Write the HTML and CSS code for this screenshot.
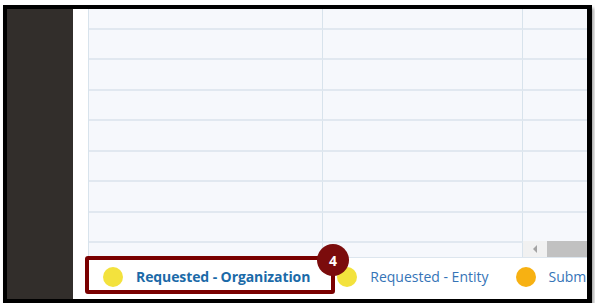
FILE: index.html
```html
<!DOCTYPE html>
<html lang="en">
<head>
    <meta charset="UTF-8">
    <title>Requests grid</title>
    <link rel="stylesheet" href="styles.css">
</head>
<body>
    <div class="frame">
        <div class="sidebar"></div>
        <div class="main">
            <div class="grid">
                <div class="row first"><div class="cell c1"></div><div class="cell c2"></div><div class="cell c3"></div></div>
                <div class="row"><div class="cell c1"></div><div class="cell c2"></div><div class="cell c3"></div></div>
                <div class="row"><div class="cell c1"></div><div class="cell c2"></div><div class="cell c3"></div></div>
                <div class="row"><div class="cell c1"></div><div class="cell c2"></div><div class="cell c3"></div></div>
                <div class="row"><div class="cell c1"></div><div class="cell c2"></div><div class="cell c3"></div></div>
                <div class="row"><div class="cell c1"></div><div class="cell c2"></div><div class="cell c3"></div></div>
                <div class="row"><div class="cell c1"></div><div class="cell c2"></div><div class="cell c3"></div></div>
                <div class="row"><div class="cell c1"></div><div class="cell c2"></div><div class="cell c3"></div></div>
                <div class="row last">
                    <div class="cell c1"></div>
                    <div class="cell c2"></div>
                    <div class="cell c3">
                        <div class="scrollbar">
                            <div class="scroll-arrow"></div>
                            <div class="scroll-thumb"></div>
                        </div>
                    </div>
                </div>
            </div>
            <div class="legend">
                <div class="legend-item">
                    <span class="dot yellow"></span>
                    <span class="label strong">Requested - Organization</span>
                </div>
                <div class="legend-item">
                    <span class="dot yellow"></span>
                    <span class="label">Requested - Entity</span>
                </div>
                <div class="legend-item">
                    <span class="dot orange"></span>
                    <span class="label">Submitted</span>
                </div>
                <div class="callout"></div>
                <div class="badge">4</div>
            </div>
        </div>
    </div>
</body>
</html>
```

FILE: styles.css
```css
body {
    margin: 0;
    background-color: #ffffff;
    font-family: 'Open Sans', 'Noto Sans', sans-serif;
}
.frame {
    display: flex;
    margin: 5px 0 0 3px;
    width: 580px;
    height: 290px;
    border: 4px solid #000000;
    border-right-width: 5px;
    box-shadow: 2px 3px 3px rgba(0, 0, 0, 0.35);
    overflow: hidden;
}
.sidebar {
    width: 66px;
    flex-shrink: 0;
    background-color: #322e2b;
}
.main {
    flex: 1;
    display: flex;
    flex-direction: column;
    background-color: #ffffff;
    overflow: hidden;
}
.grid {
    margin-left: 15px;
    height: 249px;
    border-left: 1px solid #d8e3ec;
    border-bottom: 1px solid #dde6ee;
    box-sizing: border-box;
    background-color: #f6f8fc;
    display: flex;
    flex-direction: column;
}
.row {
    display: flex;
    height: 30.43px;
    flex-shrink: 0;
}
.row.first {
    height: 21px;
}
.row.last {
    flex: 1;
    height: auto;
}
.cell {
    box-sizing: border-box;
    border-bottom: 2px solid #e1e8f0;
    border-right: 1px solid #d8e3ec;
    flex-shrink: 0;
}
.row.last .cell {
    border-bottom: none;
}
.c1 {
    width: 234px;
}
.c2 {
    width: 200px;
}
.c3 {
    width: 80px;
    position: relative;
}
.scrollbar {
    position: absolute;
    left: 0;
    bottom: 0;
    right: 0;
    height: 16px;
    display: flex;
    background-color: #f1f1f1;
}
.scroll-arrow {
    width: 24px;
    display: flex;
    align-items: center;
    justify-content: center;
}
.scroll-arrow::before {
    content: '';
    border-top: 4px solid transparent;
    border-bottom: 4px solid transparent;
    border-right: 4px solid #a3a3a3;
}
.scroll-thumb {
    flex: 1;
    background-color: #c1c1c1;
}
.legend {
    position: relative;
    flex: 1;
    display: flex;
    align-items: center;
    padding-left: 30px;
    padding-bottom: 4px;
}
.legend-item {
    display: flex;
    align-items: center;
    gap: 13px;
    margin-right: 27px;
    flex-shrink: 0;
}
.dot {
    width: 20px;
    height: 20px;
    border-radius: 50%;
    flex-shrink: 0;
}
.dot.yellow {
    background-color: #f3e23d;
}
.dot.orange {
    background-color: #f7b112;
}
.label {
    font-size: 14px;
    color: #3574b7;
    white-space: nowrap;
}
.label.strong {
    font-weight: bold;
    color: #1b6aa8;
    letter-spacing: -0.1px;
}
.callout {
    position: absolute;
    left: 12px;
    top: -2px;
    width: 242px;
    height: 30px;
    border: 4px solid #7a0000;
    border-radius: 3px;
}
.badge {
    position: absolute;
    left: 244px;
    top: -14px;
    width: 32px;
    height: 32px;
    border-radius: 50%;
    background-color: #7b0c0c;
    color: #ffffff;
    font-size: 14px;
    font-weight: bold;
    display: flex;
    align-items: center;
    justify-content: center;
}
```
